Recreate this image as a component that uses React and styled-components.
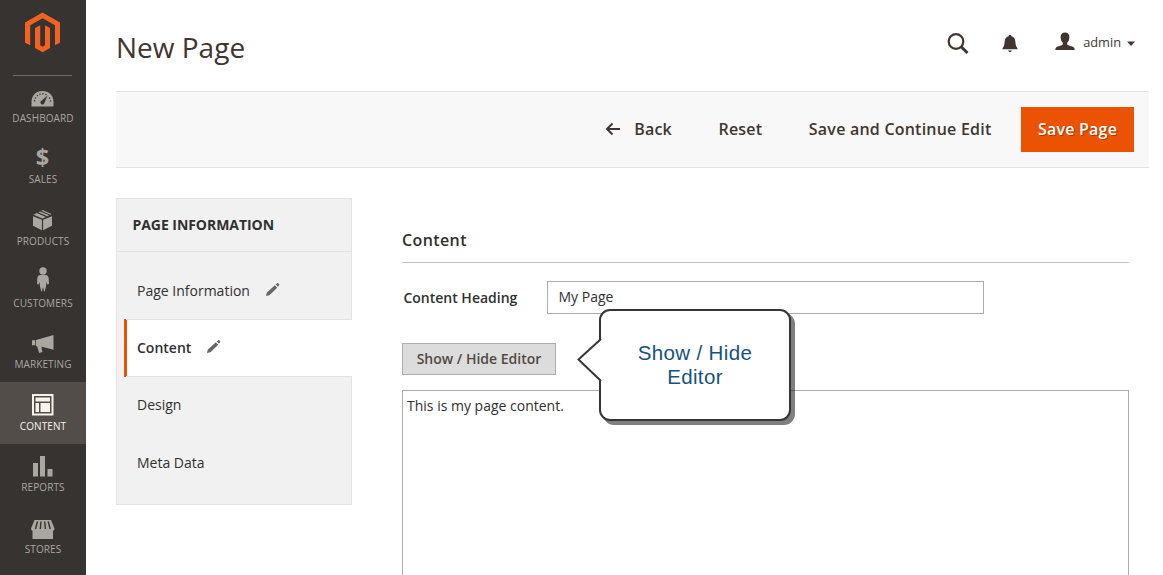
import React from "react";
import styled, { createGlobalStyle } from "styled-components";

const GlobalStyle = createGlobalStyle`
  *, *::before, *::after { box-sizing: border-box; }
  body {
    margin: 0;
    background: #fff;
    color: #303030;
    font: 400 14px/20px "Open Sans", "Noto Sans", sans-serif;
    overflow: hidden;
  }
`;

const Layout = styled.div`
  display: flex;
  height: 575px;
  overflow: hidden;
`;

const Sidebar = styled.nav`
  flex: 0 0 86px;
  background: #373330;
`;

const LogoArea = styled.div`
  height: 76px;
  margin: 0 14px 0 13px;
  padding: 12px 0 0 12px;
  border-bottom: 1px solid #736963;
`;

const Menu = styled.ul`
  list-style: none;
  margin: -2px 0 0;
  padding: 0;
`;

const MenuItem = styled.li`
  display: flex;
  flex-direction: column;
  align-items: center;
  height: 61.6px;
  padding-top: 6px;
  background: ${(p) => (p.$active ? "#524d49" : "transparent")};
  color: ${(p) => (p.$active ? "#f7f3eb" : "#aaa6a0")};
  --tile: ${(p) => (p.$active ? "#524d49" : "#373330")};
`;

const MenuIcon = styled.svg`
  display: block;
  width: 40px;
  height: 32px;
  flex: none;
`;

const MenuLabel = styled.span`
  margin-top: -0.2px;
  font-size: 10px;
  line-height: 12px;
  letter-spacing: 0.1px;
  white-space: nowrap;
`;

const Main = styled.main`
  width: 1033px;
  margin-left: 30px;
`;

const PageHeader = styled.header`
  display: flex;
  align-items: flex-start;
  justify-content: space-between;
  height: 91px;
  padding: 27px 14px 0 0;
`;

const PageTitle = styled.h1`
  margin: 0;
  font-size: 28px;
  line-height: 40px;
  font-weight: 400;
  color: #41362f;
`;

const HeaderTools = styled.div`
  display: flex;
  align-items: center;
  height: 32px;
  color: #41362f;
`;

const ToolIcon = styled.svg`
  display: block;
  width: ${(p) => p.$w}px;
  height: 24px;
  margin-right: ${(p) => p.$gap || 0}px;
`;

const UserName = styled.span`
  margin: -2px 6px 0 0;
  font-size: 12.8px;
  line-height: 20px;
`;

const Toolbar = styled.div`
  display: flex;
  align-items: center;
  justify-content: flex-end;
  height: 77px;
  padding-right: 15px;
  background: #f8f8f8;
  border-top: 1px solid #e3e3e3;
  border-bottom: 1px solid #e3e3e3;
`;

const ActionButton = styled.button`
  display: flex;
  align-items: center;
  height: 45px;
  margin: 0 ${(p) => p.$gap}px 0 0;
  padding: 0 0 2px;
  border: 0;
  background: none;
  color: #41362f;
  font: 600 16px/22px "Open Sans", sans-serif;
  letter-spacing: 0.22px;
  white-space: nowrap;
`;

const BackArrow = styled.svg`
  width: 16px;
  height: 14px;
  margin: 1px 13px 0 0;
`;

const PrimaryButton = styled(ActionButton)`
  justify-content: center;
  width: 113px;
  background: #eb5202;
  color: #fff;
  text-shadow: 1px 1px 0 rgba(0, 0, 0, 0.3);
`;

const Body = styled.div`
  display: flex;
  align-items: flex-start;
  padding-top: 30px;
`;

const Tabs = styled.aside`
  width: 236px;
  height: 307px;
  background: #f1f1f1;
  border: 1px solid #e3e3e3;
`;

const TabsTitle = styled.div`
  height: 53px;
  padding: 16px 0 0 15.5px;
  border-bottom: 1px solid #e3e3e3;
  font-weight: 700;
  letter-spacing: -0.05px;
`;

const TabList = styled.div`
  padding: 10px 0 0 7px;
`;

const Tab = styled.div`
  display: flex;
  align-items: flex-start;
  height: ${(p) => (p.$active ? 58 : 57)}px;
  padding: ${(p) => p.$top}px 0 0 13px;
  ${(p) =>
    p.$active &&
    `
    margin-right: -1px;
    background: #fff;
    border: solid #e3e3e3;
    border-width: 1px 0;
    border-image: linear-gradient(90deg, #eb5202 3px, #e3e3e3 3px) 1;
    box-shadow: inset 3px 0 #eb5202;
    font-weight: 600;
  `}
`;

const Pencil = styled.svg`
  width: 15px;
  height: 15px;
  margin: 1px 0 0 15px;
`;

const Form = styled.section`
  width: 727px;
  margin-left: 50px;
`;

const SectionTitle = styled.h2`
  height: 65px;
  margin: 0;
  padding-top: 31px;
  border-bottom: 1px solid #cac3b4;
  font-size: 16px;
  line-height: 22px;
  font-weight: 600;
  letter-spacing: 0.4px;
`;

const Field = styled.div`
  display: flex;
  height: 33px;
  margin-top: 18px;
`;

const FieldLabel = styled.label`
  width: 145px;
  padding-left: 1.4px;
  line-height: 33px;
  font-weight: 600;
`;

const TextInput = styled.div`
  width: 437px;
  padding-left: 10.5px;
  border: 1px solid #adadad;
  line-height: 29px;
`;

const EditorRow = styled.div`
  position: relative;
  margin-top: 29px;
`;

const EditorButton = styled.button`
  display: block;
  width: 154px;
  height: 32px;
  padding: 0;
  border: 1px solid #adadad;
  background: #dcdcdc;
  color: #514943;
  font: 600 14px/20px "Open Sans", sans-serif;
`;

const TextArea = styled.div`
  height: 260px;
  margin-top: 15px;
  padding: 5px 4px;
  border: 1px solid #adadad;
`;

const Callout = styled.div`
  position: absolute;
  z-index: 2;
  left: 197px;
  top: -34px;
  width: 192px;
  height: 112px;
  padding-top: 30px;
  border: 2px solid #363636;
  border-radius: 11px;
  background: #fff;
  box-shadow: 4px 4px 0 rgba(0, 0, 0, 0.5);
  color: #14537d;
  font: 400 20.5px/24px "Liberation Sans", Arial, sans-serif;
  letter-spacing: 0.35px;
  text-align: center;
`;

const CalloutTip = styled.svg`
  position: absolute;
  left: -24px;
  top: 26px;
  width: 26px;
  height: 48px;
`;

const menu = [
  {
    label: "DASHBOARD",
    icon: (
      <>
        <path d="M8.500 26.500V22C8.500 15.500 13 11 19.500 11S30.500 15.500 30.500 22V26.500Z" fill="currentColor" />
        <path d="M11.500 21.500a8 8 0 0 1 13-6M26.300 17.500a8 8 0 0 1 1.200 4" fill="none" stroke="var(--tile)" strokeWidth="1.300" strokeDasharray="1.300 1.700" />
        <path d="M24.500 15.500L21.200 23.500a2 2 0 0 1-3.500-2Z" fill="var(--tile)" />
      </>
    ),
  },
  {
    label: "SALES",
    icon: (
      <text x="19.400" y="24" textAnchor="middle" fontFamily="Open Sans" fontWeight="700" fontSize="23.500" fill="currentColor">$</text>
    ),
  },
  {
    label: "PRODUCTS",
    icon: (
      <g fill="currentColor">
        <path d="M10 13.200l8.900 3.600v10.400L10 22.700ZM29 13.200l-8.900 3.600v10.400L29 22.700Z" />
        <path d="M10.500 11.800l3.300-1.700 9 3.900-3.300 1.500ZM15.300 9.300l1.800-.9 9 3.900-1.800.9ZM18.300 7.700l1.200-.6 9 4-1.200.7Z" />
      </g>
    ),
  },
  {
    label: "CUSTOMERS",
    icon: (
      <g fill="currentColor">
        <circle cx="20" cy="6" r="3.700" />
        <path d="M17.500 10h5c2.200 0 3 1.400 3.200 3.500l.3 5.500-1.600.5-.9-2.500-.5 4.500-1.300 5h-.6L20 22l-1.100 4.500h-.6L17 21.500l-.5-4.500-.9 2.500L14 19l.3-5.500c.2-2.100 1-3.500 3.200-3.500Z" />
      </g>
    ),
  },
  {
    label: "MARKETING",
    icon: (
      <g fill="currentColor">
        <path d="M9 14.200h3.300v5H9ZM13 14l17.500-5v14.800L19 20.800l-.5.700.9 4.500-3.200 1-2-6.500-1.200-.7Z" />
      </g>
    ),
  },
  {
    label: "CONTENT",
    active: true,
    icon: (
      <>
        <path d="M9 6h21.500v21.500H9Z" fill="currentColor" />
        <path d="M11 8h17.500v17.500H11Z" fill="var(--tile)" />
        <path d="M12.500 9.500H27v4H12.500ZM12.500 15h3.500v9h-3.500ZM17.500 15H27v9h-9.500Z" fill="currentColor" />
      </>
    ),
  },
  {
    label: "REPORTS",
    icon: <path d="M10 13h5v13.500h-5ZM17 6h5v20.500h-5ZM24.500 19h5v7.500h-5Z" fill="currentColor" />,
  },
  {
    label: "STORES",
    icon: (
      <>
        <path d="M11.500 9h16.500l3.500 8.500c0 1.300-.7 2-1.500 2.300V28H9.500v-8.200C8.600 19.500 8 18.800 8 17.500Z" fill="currentColor" />
        <path d="M14.500 10.500l-2 7.500M18 10.500l-.7 7.500M21.700 10.500l.7 7.500M25.200 10.500l2 7.500" stroke="var(--tile)" strokeWidth="1.400" fill="none" />
      </>
    ),
  },
];

const tabs = [
  { label: "Page Information", edited: true, top: 19 },
  { label: "Content", edited: true, active: true, top: 18 },
  { label: "Design", top: 18 },
  { label: "Meta Data", top: 19 },
];

export default function App() {
  return (
    <>
      <GlobalStyle />
      <Layout>
        <Sidebar>
          <LogoArea>
            <svg width="35" height="41" viewBox="0 0 35 41" fill="#f26322">
              <path d="M17.500.5L35 10.500V30.700L30 33.300V13.300L17.500 6.200L5.200 13.300V33.300L0 30.700V10.500Z" />
              <path d="M10 16L15.200 13.300V33.300L17.600 34.700L20 33.300V13.300L25 16V36L17.600 40.300L10 36Z" />
            </svg>
          </LogoArea>
          <Menu>
            {menu.map((m) => (
              <MenuItem key={m.label} $active={m.active}>
                <MenuIcon viewBox="0 0 40 32">{m.icon}</MenuIcon>
                <MenuLabel>{m.label}</MenuLabel>
              </MenuItem>
            ))}
          </Menu>
        </Sidebar>
        <Main>
          <PageHeader>
            <PageTitle>New Page</PageTitle>
            <HeaderTools>
              <ToolIcon $w={22} $gap={33} viewBox="0 0 22 24">
                <circle cx="9" cy="10.500" r="7.300" fill="none" stroke="currentColor" strokeWidth="2.200" />
                <path d="M14.200 15.700L20.500 22" stroke="currentColor" strokeWidth="3" />
              </ToolIcon>
              <ToolIcon $w={16} $gap={37} viewBox="0 0 16 24">
                <path d="M8 4c.8 0 1.400.5 1.500 1.300 2.500.8 3.800 2.800 3.900 5.700.1 3 .8 4.500 2.100 6.500v.7H.5v-.7c1.300-2 2-3.500 2.100-6.500C2.700 8.100 4 6.100 6.500 5.300 6.600 4.500 7.200 4 8 4ZM6 19.500h4c-.3.900-1 1.500-2 1.500s-1.700-.6-2-1.500Z" fill="currentColor" />
              </ToolIcon>
              <ToolIcon $w={20} $gap={8} viewBox="0 0 20 24">
                <path d="M10 1.500c2.800 0 4.400 1.700 4.400 4.500 0 2.500-.8 4.600-2.200 5.800v1.700c.3 1 5.500 1.700 6.700 3 .6.600.8 1.500.8 2.500H.3c0-1 .2-1.900.8-2.500 1.200-1.300 6.400-2 6.700-3v-1.700C6.400 10.600 5.600 8.500 5.600 6c0-2.800 1.600-4.500 4.400-4.500Z" fill="currentColor" />
              </ToolIcon>
              <UserName>admin</UserName>
              <svg width="8" height="5" viewBox="0 0 8 5"><path d="M0 .5h8L4 5Z" fill="currentColor" /></svg>
            </HeaderTools>
          </PageHeader>
          <Toolbar>
            <ActionButton $gap={46.500}>
              <BackArrow viewBox="0 0 16 14">
                <path d="M15 7H2M7.500 1.500L2 7l5.500 5.500" fill="none" stroke="currentColor" strokeWidth="2" />
              </BackArrow>
              Back
            </ActionButton>
            <ActionButton $gap={46.500}>Reset</ActionButton>
            <ActionButton $gap={29.500}>Save and Continue Edit</ActionButton>
            <PrimaryButton $gap={0}>Save Page</PrimaryButton>
          </Toolbar>
          <Body>
            <Tabs>
              <TabsTitle>PAGE INFORMATION</TabsTitle>
              <TabList>
                {tabs.map((t) => (
                  <Tab key={t.label} $active={t.active} $top={t.top}>
                    {t.label}
                    {t.edited && (
                      <Pencil viewBox="0 0 16 16" fill="#666">
                        <path d="M1 15l1-3.800L10.500 3.500l2.500 2.600L4.700 14ZM11.500 2.700L13 1.300q.6-.4 1.200.1l.9 1q.4.600-.1 1.100L13.800 5Z" />
                      </Pencil>
                    )}
                  </Tab>
                ))}
              </TabList>
            </Tabs>
            <Form>
              <SectionTitle>Content</SectionTitle>
              <Field>
                <FieldLabel>Content Heading</FieldLabel>
                <TextInput>My Page</TextInput>
              </Field>
              <EditorRow>
                <EditorButton>Show / Hide Editor</EditorButton>
                <Callout>
                  <CalloutTip viewBox="0 0 26 48">
                    <path d="M26 2.500H24L1.500 23L24 44.500H26Z" fill="#fff" />
                    <path d="M24 2L1.500 22.500L24 44" fill="none" stroke="#363636" strokeWidth="2" />
                  </CalloutTip>
                  Show / Hide
                  <br />
                  Editor
                </Callout>
              </EditorRow>
              <TextArea>This is my page content.</TextArea>
            </Form>
          </Body>
        </Main>
      </Layout>
    </>
  );
}
